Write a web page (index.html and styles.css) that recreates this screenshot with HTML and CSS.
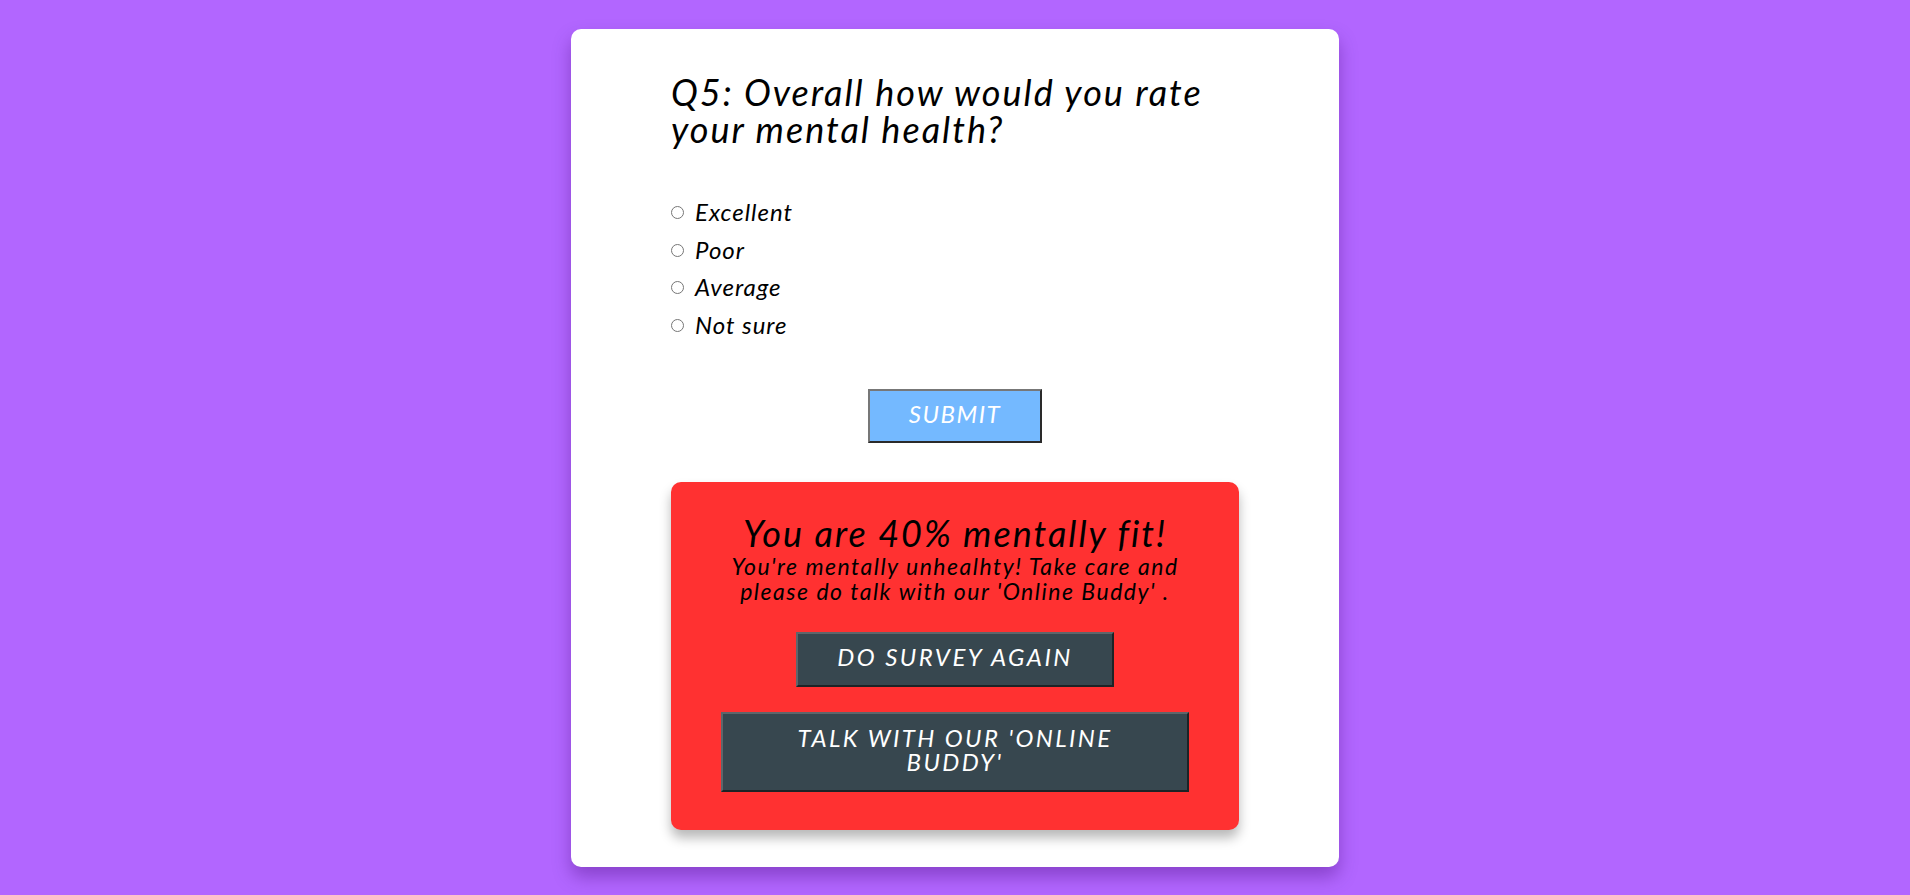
FILE: index.html
```html
<!DOCTYPE html>
<html lang="en">
<head>
<meta charset="utf-8">
<title>Mental Health Survey</title>
<link rel="stylesheet" href="styles.css">
</head>
<body>
<main class="card">
  <h2 class="question">Q5: Overall how would you rate your mental health?</h2>
  <form class="options">
    <label class="option"><input type="radio" name="q5" class="radio">Excellent</label>
    <label class="option"><input type="radio" name="q5" class="radio">Poor</label>
    <label class="option"><input type="radio" name="q5" class="radio">Average</label>
    <label class="option"><input type="radio" name="q5" class="radio">Not sure</label>
  </form>
  <div class="submit-row">
    <button type="button" class="btn btn-submit">SUBMIT</button>
  </div>
  <section class="result">
    <h3 class="result-title">You are 40% mentally fit!</h3>
    <p class="result-text">You're mentally unhealhty! Take care and please do talk with our 'Online Buddy' .</p>
    <div class="result-actions">
      <button type="button" class="btn btn-dark btn-again">DO SURVEY AGAIN</button>
      <button type="button" class="btn btn-dark btn-talk">TALK WITH OUR 'ONLINE BUDDY'</button>
    </div>
  </section>
</main>
</body>
</html>
```
FILE: styles.css
```css
html, body {
  margin: 0;
  padding: 0;
}
body {
  background: #b266ff;
  font-family: "Lato", "Noto Sans", sans-serif;
  font-style: italic;
  color: #000;
  min-height: 895px;
  padding-top: 29px;
  box-sizing: border-box;
}
.card {
  width: 568px;
  margin: 0 auto;
  background: #fff;
  border-radius: 10px;
  padding: 45px 100px 37px;
  box-shadow: 0 10px 18px rgba(60, 0, 110, 0.35);
}
.question {
  margin: 0;
  font-size: 36px;
  line-height: 37px;
  font-weight: 400;
  font-style: italic;
  letter-spacing: 2px;
}
.options {
  margin-top: 45px;
  display: flex;
  flex-direction: column;
}
.option {
  display: block;
  font-size: 24px;
  line-height: 37.5px;
  height: 37.5px;
  letter-spacing: 1px;
}
.radio {
  width: 13px;
  height: 13px;
  margin: 0 11px 0 0;
  vertical-align: 2px;
}
.submit-row {
  margin-top: 46px;
  display: flex;
  justify-content: center;
}
.btn {
  font-family: "Lato", "Noto Sans", sans-serif;
  font-style: italic;
  font-size: 24px;
  color: #fff;
  border-width: 2px;
  border-style: solid;
  border-color: #777 #2a2a2a #2a2a2a #777;
  cursor: pointer;
}
.btn-submit {
  width: 174px;
  height: 54px;
  background: #74b9ff;
  padding: 0 0 5px;
  letter-spacing: 1.5px;
}
.result {
  margin-top: 39px;
  background: #ff3131;
  border-radius: 10px;
  padding: 30px 50px 38px;
  text-align: center;
  box-shadow: 0 8px 12px rgba(0, 0, 0, 0.28);
}
.result-title {
  margin: 0;
  font-size: 36px;
  line-height: 42px;
  font-weight: 400;
  letter-spacing: 2px;
}
.result-text {
  margin: 0;
  font-size: 23px;
  line-height: 25px;
  letter-spacing: 1.5px;
}
.result-actions {
  margin-top: 28px;
  display: flex;
  flex-direction: column;
  align-items: center;
  gap: 25px;
}
.btn-dark {
  background: #37474f;
  border-color: #5e666b #1c2326 #1c2326 #5e666b;
}
.btn-again {
  width: 318px;
  height: 55px;
  padding: 0 0 6px;
  letter-spacing: 2.5px;
}
.btn-talk {
  width: 100%;
  height: 80px;
  padding: 0 60px 5px;
  line-height: 24px;
  letter-spacing: 2.4px;
}
```
